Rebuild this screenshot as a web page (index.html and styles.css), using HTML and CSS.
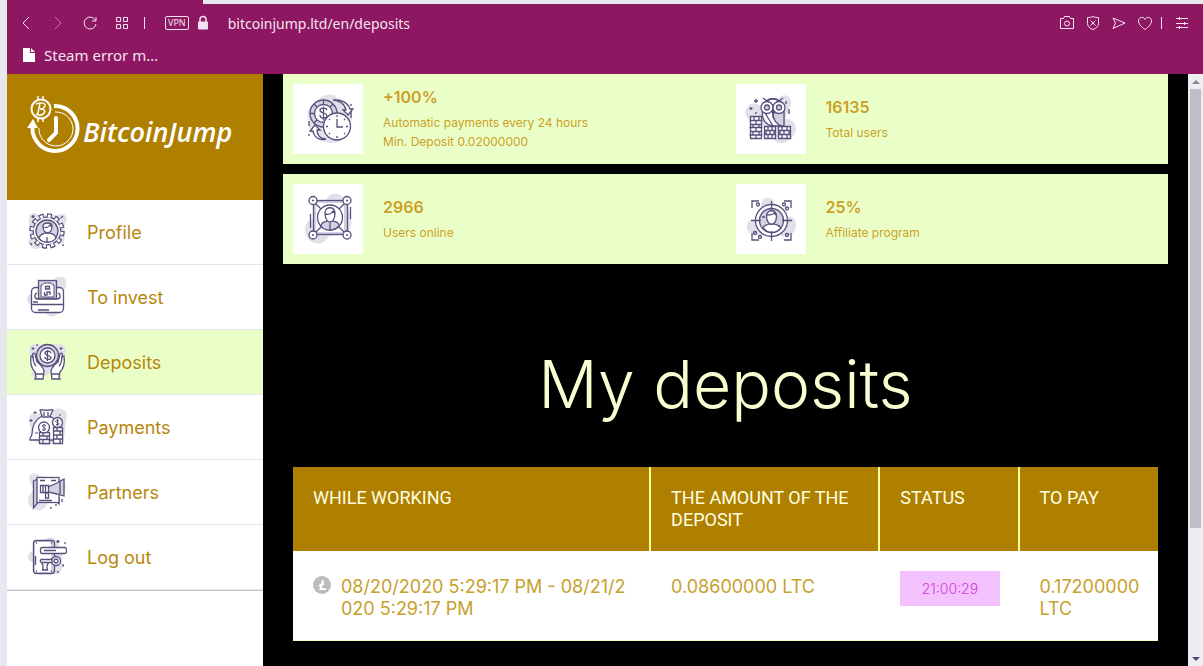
FILE: index.html
```html
<!DOCTYPE html>
<html lang="en">
<head>
    <meta charset="utf-8">
    <title>BitcoinJump - My deposits</title>
    <meta name="viewport" content="width=device-width, initial-scale=1.0">
    <link rel="stylesheet" href="styles.css">
</head>
<body>
    <div class="tabstrip"><div class="tab"></div></div>
    <div class="window">
        <header class="browser">
            <div class="toolbar">
                <button class="tool" aria-label="Back"><svg width="16" height="16" viewBox="0 0 16 16"><path d="M11 2 5 8l6 6"/></svg></button>
                <button class="tool off" aria-label="Forward"><svg width="16" height="16" viewBox="0 0 16 16"><path d="m5 2 6 6-6 6"/></svg></button>
                <button class="tool" aria-label="Reload"><svg width="16" height="16" viewBox="0 0 16 16"><path d="M13.500 5.500A6 6 0 1 0 14 9M14 2v4h-4"/></svg></button>
                <button class="tool" aria-label="Speed dial"><svg width="16" height="16" viewBox="0 0 16 16"><path d="M2.500 2.500h4v4h-4zM9.500 2.500h4v4h-4zM2.500 9.500h4v4h-4zM9.500 9.500h4v4h-4z"/></svg></button>
                <span class="divider"></span>
                <button class="vpn">VPN</button>
                <svg class="lock" width="12" height="16" viewBox="0 0 12 16"><path d="M3 7V4.500a3 3 0 0 1 6 0V7" fill="none" stroke="#f3e3f0" stroke-width="1.500"/><rect x="1" y="6.500" width="10" height="8" rx="1" fill="#f3e3f0"/></svg>
                <input class="address" type="text" aria-label="Address" value="bitcoinjump.ltd/en/deposits">
                <div class="tools">
                    <button class="tool" aria-label="Snapshot"><svg width="16" height="16" viewBox="0 0 16 16"><path d="M1.500 3.500h3l1-2h5l1 2h3v10h-13z"/><circle cx="8" cy="8.500" r="2.500"/></svg></button>
                    <button class="tool" aria-label="Ad blocker"><svg width="16" height="16" viewBox="0 0 16 16"><path d="M8 1.500c2 1 4 1 5.500 1v6c0 3-2.500 5-5.500 6-3-1-5.500-3-5.500-6v-6c1.500 0 3.500 0 5.500-1zM5.500 5.500l5 5M10.500 5.500l-5 5"/></svg></button>
                    <button class="tool" aria-label="My Flow"><svg width="16" height="16" viewBox="0 0 16 16"><path d="m2 3 12 5-12 5.500L4.500 8z"/></svg></button>
                    <button class="tool" aria-label="Bookmark"><svg width="16" height="16" viewBox="0 0 16 16"><path d="M8 14.500C4 11.500 1.500 9 1.500 6c0-4 5-5 6.500-1.500C9.500 1 14.500 2 14.500 6c0 3-2.500 5.500-6.500 8.500z"/></svg></button>
                    <span class="divider"></span>
                    <button class="tool" aria-label="Easy setup"><svg width="14" height="14" viewBox="0 0 14 14"><path d="M1 2.500h12M1 7.500h12M1 11.500h12M4.500 1v3M9.500 6v3M4.500 10v3"/></svg></button>
                </div>
            </div>
            <div class="bookmarks">
                <a class="bookmark" href="#">
                    <svg width="14" height="16" viewBox="0 0 14 16"><path d="M1 1h7v5h5v9H1z" fill="#fff"/><path d="m9 1 4 4H9z" fill="#fff"/></svg>
                    Steam error m…
                </a>
            </div>
        </header>

        <div class="page">
            <aside class="sidebar">
                <a class="logo" href="#">
                    <svg width="56" height="60" viewBox="0 0 56 60" fill="none" stroke="#fff">
                        <path d="M27 10A22.500 22.500 0 1 1 6 28" stroke-width="4"/>
                        <path d="m0 32 6-9 5 9z" fill="#fff" stroke="none"/>
                        <path d="M28 16a17 17 0 1 1-16 16" stroke-width="1"/>
                        <path d="M29 22v15l-7 7" stroke-width="4" stroke-linecap="round"/>
                        <circle cx="14" cy="13" r="9.500" stroke-width="2"/>
                        <path d="M11 0v3M16 0v3M11 23v3M16 23v3" stroke-width="1.500"/>
                        <path d="M13 7c-1 5-1 8-3 12M9 8c5-2 10-1 9 2-1 2-3 3-5 3 4 0 6 2 4 4-2 3-6 2-8 1" stroke-width="1.500"/>
                    </svg>
                    <span class="logo-text">BitcoinJump</span>
                </a>
                <nav class="menu">
                    <a class="menu-item" href="#">
                        <svg class="icon" width="40" height="40" viewBox="0 0 40 40">
                            <path class="blob" d="M2 6a5 5 0 0 1 9-3l20 0a5 5 0 0 1 7 8l-1 20-22 3a7 7 0 1 1-12-9z"/>
                            <circle cx="20" cy="19" r="15.500" pathLength="120" stroke-width="4.500" stroke-dasharray="6 4"/>
                            <circle class="dark" cx="20" cy="19" r="14.500" stroke="none"/>
                            <circle class="cut" cx="20" cy="19" r="15" pathLength="120" stroke-width="3" stroke-dasharray="3.500 6.500" stroke-dashoffset="-1.250"/>
                            <circle class="white" cx="20" cy="19" r="13.200" stroke="none"/>
                            <circle class="shade" cx="20" cy="19" r="11"/>
                            <path class="white" d="M12 26c1-4 4-4 6-5h4c3 1 6 1 7 5-3 5-13 6-17 0zM20 25v5"/>
                            <path class="white" d="M16 14c0-4 9-4 9 0 0 9-9 9-9 0zM16 15c3 1 6 0 7-2l2 2"/>
                            <path d="M6 3v3M4.500 4.500h3M36 4l-2 2M5 33l-2-2M36 32v2"/>
                        </svg>
                        Profile
                    </a>
                    <a class="menu-item" href="#">
                        <svg class="icon" width="40" height="40" viewBox="0 0 40 40">
                            <path class="blob" d="M27 4a6 6 0 0 1 12 2c1 5-2 6-3 9L4 28a6 6 0 0 1-3-9l8-6zM18 35h14c-3 6-10 6-14 0z"/>
                            <rect class="white" x="4.500" y="10.500" width="32" height="25" rx="4"/>
                            <path d="M10 16c-3 1-3 6 1 6h19c4 0 4-5 1-6"/>
                            <rect class="shade" x="11.500" y="3.500" width="18" height="18"/>
                            <path class="white" d="M14 8c2 0 3-1 3-2h7c0 1 1 2 3 2v12H14z" stroke-width="1"/>
                            <path d="M17.500 15v3h2.500v-3h3v3M18.500 9.500h4v2.500h-4zM5 27.500h31M11 33h11M6 25h5"/>
                        </svg>
                        To invest
                    </a>
                    <a class="menu-item active" href="#">
                        <svg class="icon" width="40" height="40" viewBox="0 0 40 40">
                            <path class="blob" d="M2 8a7 7 0 0 1 11-5l20-1a6 6 0 0 1 5 9l-4 14-18 10c-6 6-15 0-10-7z"/>
                            <circle class="shade" cx="20.500" cy="13.500" r="11"/><circle class="white" cx="20.500" cy="13.500" r="7.500"/>
                            <path d="M24 11c-1-3-6-2-6 0 0 3 6 2 6 5 0 2-6 2-6-1M20.500 8v11"/>
                            <path class="white" d="M4 14c-1 7 0 12 4 16l1 5-1 2h8l1-8c-1-4-4-7-7-9L8 12c-2-2-3 0-2 3zM37 14c1 7 0 12-4 16l-1 5 1 2h-8l-1-8c1-4 4-7 7-9l2-8c2-2 3 0 2 3z"/>
                            <path d="M6 14c0 5 1 8 3 10M35 14c0 5-1 8-3 10M9 32h7M25 32h7"/>
                            <path d="M6 5v3M4.500 6.500h3M34 5v3M32.500 6.500h3M10 2v2" stroke-width="1"/>
                        </svg>
                        Deposits
                    </a>
                    <a class="menu-item" href="#">
                        <svg class="icon" width="40" height="40" viewBox="0 0 40 40">
                            <path class="blob" d="M2 14a7 7 0 0 1 11-7l14-4c6-4 16 1 12 9l-2 22-19 5-12-6z"/>
                            <path class="white" d="M13 3c3-1 4 1 6 0 2 1 4-1 7 0l-3 6c5 3 8 7 9 12v12H3c-1-3 2-3 2-6 0-8 3-14 10-18z"/>
                            <path d="M15 10h9M17 5v4M21 5v4"/>
                            <path class="white" d="M12.500 25.500h10v11h-10zM12 29h11M12 32.500h11M16 26v3M20 29v3M16 33v3M26.500 20.500h9v16h-9zM26 24h10M26 28h10M26 32h10M30 21v3M33 24v4M30 28v4M33 32v4"/>
                            <circle class="white" cx="17" cy="20.500" r="5.500"/><circle class="white" cx="30.500" cy="15.500" r="5"/>
                            <path d="M19 18.500c-4-2-5 1-2 2s2 4-2 2M17 17v7M32 14c-3-2-5 1-2 1.500s3 3-1 2M30.500 12v7M8 4v3M6.500 5.500h3M4 12v3M2.500 13.500h3M33 7v2M8 26h3" stroke-width="1"/>
                        </svg>
                        Payments
                    </a>
                    <a class="menu-item" href="#">
                        <svg class="icon" width="40" height="40" viewBox="0 0 40 40">
                            <path class="blob" d="M2 7c0-6 8-7 11-3l20 3c8 0 7 12 2 15l-15 10C17 42 1 39 1 29c0-6 4-8 5-12z"/>
                            <path class="shade" d="m6.500 9 4-2v24l-4 5zM28 28l4 4v-6"/>
                            <rect class="white" x="10" y="5.500" width="22" height="25"/>
                            <path class="shade" d="m21 15 9-4 7-4v17l-7-2-9-2z"/>
                            <path class="white" d="M13.500 13.500h8v7h-8zM16 14v6M18.500 14v6M18.500 21h3v5h-3z"/>
                            <path d="M33 9v13M13 8.500h5M24 8.500h5M12 28.500h13M35 27v3M29 32v2M24 35v2"/>
                        </svg>
                        Partners
                    </a>
                    <a class="menu-item" href="#">
                        <svg class="icon" width="40" height="40" viewBox="0 0 40 40">
                            <path class="blob" d="M18 2c8-4 13 1 14 6l4 6-1 15c0 9-9 11-14 5L5 25c-6-1-5-10 1-11z"/>
                            <rect class="shade" x="6.500" y="3.500" width="21" height="33" rx="3"/>
                            <rect class="white" x="8" y="5" width="16" height="30" rx="2" stroke="none"/>
                            <rect class="white" x="13.500" y="10.500" width="26" height="6" rx="2"/>
                            <circle class="white" cx="29" cy="24" r="4.500"/><circle cx="29" cy="24" r="2"/>
                            <path class="white" d="M25 22.500H14c-1 1-1 3 1 3h10zM14.500 26c2 2 2 4 1 7h5c-1-3-1-5 1-7"/>
                            <path d="M9 6h1M24 6h1M9 34h1M24 34h1M8.500 19v9M17 13.500h12M31 3v3M29.500 4.500h3M38 5v2M36 27v3M31 34v2"/>
                        </svg>
                        Log out
                    </a>
                </nav>
            </aside>

            <main class="content">
                <section class="stats">
                    <div class="stat">
                        <svg class="stat-icon icon" width="70" height="70" viewBox="0 0 70 70">
                            <path class="blob" d="M24 18c4-8 17-10 20-4 18 4 18 22 11 29-1 18-22 20-30 10-12-4-8-15-10-18-2-8 2-14 9-17z"/>
                            <circle class="shade" cx="30.500" cy="29.500" r="13.500"/><circle class="white" cx="30.500" cy="29.500" r="9"/>
                            <path d="M30.500 16v5M17 29.500h5M21 20l3 3M40 20l-3 3M21 39l3-3M34 26c-1-3-7-2-7 0 0 4 7 2 7 6 0 3-7 3-7-1M30.500 22.500v14"/>
                            <path class="white" d="M40 16c6 0 12 4 13 10h-3l5 5 5-6h-3c-2-6-9-10-17-9zM33 55c-6 0-9-4-9-9h3l-5-5-5 6h3c1 6 6 10 13 8z"/>
                            <circle class="white" cx="44" cy="42.500" r="13.500"/>
                            <path d="M44 35v8h6M44 31v2M44 52v2M33 42.500h2M53 42.500h2M36 35l1 1M52 35l-1 1M36 50l1-1M52 50l-1-1M58 20v2M58 27v7M16 37v5M16 50v2"/>
                        </svg>
                        <div class="stat-text">
                            <strong class="stat-value">+100%</strong>
                            <span>Automatic payments every 24 hours</span>
                            <span>Min. Deposit 0.02000000</span>
                        </div>
                    </div>
                    <div class="stat">
                        <svg class="stat-icon icon" width="70" height="70" viewBox="0 0 70 70">
                            <path class="blob" d="M12 22c5-5 11-2 13 1l16-7c5-8 15-5 14 4l-6 15c13-1 14 14 5 20-6 7-15 4-16 0l-14-17c-15 0-18-9-12-16z"/>
                            <path class="white" d="M26.500 28c-1 8 4 13 10 14h11V27c0-16-22-17-21 1z"/>
                            <path class="shade" d="M37 29c0 6 3 11 9 13h2V27z"/>
                            <path d="m27 14 4 3c4-3 8-3 12 0l4-3M29 29l8 13M37 28v6"/>
                            <circle class="white" cx="31" cy="23.500" r="6"/><circle class="white" cx="43" cy="23.500" r="6"/>
                            <circle class="shade" cx="31" cy="23.500" r="2.500"/><circle class="shade" cx="43" cy="23.500" r="2.500"/>
                            <path d="m36 26 1 4 1-4"/>
                            <path class="white" d="M14.500 32.500h11v22h-11zM13.500 36.500h13M14.500 40.500h11M13.500 43.500h13M14.500 47.500h11M13.500 51h13M18 33v3M23 33v3M20 37v3M17 41v3M23 41v3M20 44v3M17 48v3M23 48v3M20 51v3"/>
                            <path class="white" d="M28.500 42.500h11v12h-11zM28 46.500h12M28 50.500h12M32 43v3M36 43v3M30 47v3M34 47v3M38 47v3M32 51v3M36 51v3M42.500 42.500h12v12h-12zM42 46.500h13M42 50.500h13M46 43v3M51 43v3M44 47v3M48 47v3M53 47v3M46 51v3M51 51v3"/>
                            <path d="M20 15v4M18 17h4M15 23v3M13.500 24.500h3M50 17v3M53 25v5M20 28v2"/>
                        </svg>
                        <div class="stat-text">
                            <strong class="stat-value">16135</strong>
                            <span>Total users</span>
                        </div>
                    </div>
                </section>
                <section class="stats">
                    <div class="stat">
                        <svg class="stat-icon icon" width="70" height="70" viewBox="0 0 70 70">
                            <path class="blob" d="M34 14c5-8 16-4 19 3l5 18c2 6-2 10-4 15L36 52c-5 11-20 9-23-1-4-10 2-15 9-16z"/>
                            <rect class="shade" x="20.500" y="16.500" width="34" height="34"/>
                            <rect class="white" x="23" y="19" width="28" height="29" stroke="none"/>
                            <path d="m20 17 34 34M54 17 20 51M17.500 30v14M57.500 23v12"/>
                            <circle class="white" cx="37" cy="33.500" r="12.500"/>
                            <path class="shade" d="M28 42c0-4 4-4 6-5h6c3 1 6 1 6 5-4 5-14 6-18 0zM37 39v7"/>
                            <path class="white" d="M32 29c0-7 10-7 10 0 0 12-10 12-10 0zM32 30c4 1 7-1 8-3l2 3"/>
                            <circle class="white" cx="20" cy="16.500" r="4"/><circle class="white" cx="54" cy="16.500" r="4"/><circle class="white" cx="20" cy="51" r="4"/><circle class="white" cx="54" cy="51" r="4"/>
                            <path d="M19 16.500h2M53 16.500h2M19 51h2M53 51h2"/>
                        </svg>
                        <div class="stat-text">
                            <strong class="stat-value">2966</strong>
                            <span>Users online</span>
                        </div>
                    </div>
                    <div class="stat">
                        <svg class="stat-icon icon" width="70" height="70" viewBox="0 0 70 70">
                            <path class="blob" d="M26 17c4-6 12-3 13 3l13 13c8-3 11 12 4 17-6 4-12 3-14-1l-18 2c-8 2-15-5-13-11 2-5 8-5 11-4z"/>
                            <circle class="white" cx="35.500" cy="36.500" r="16"/><circle class="shade" cx="35.500" cy="36.500" r="12"/>
                            <path class="white" d="M27 44c1-3 4-3 6-4h5c3 1 5 1 7 4-5 6-13 6-18 0z"/>
                            <path class="white" d="M30.500 32c0-7 10-7 10 0 0 11-10 11-10 0zM31 31c4 0 6 0 7-2l2 2"/>
                            <path d="M35.500 17v9M35.500 47v10M15 36.500h10M46 36.500h10M16 24v-7h7M48 17h7v7M16 49v7h7M48 56h7v-7M26 33h3M43 41v2"/>
                            <circle cx="22" cy="20.500" r="1.500"/><circle cx="48" cy="20.500" r="1.500"/><circle cx="51" cy="24.500" r="1.500"/><circle cx="19" cy="49" r="1.500"/><circle cx="24" cy="53" r="1.500"/><circle cx="51" cy="51" r="1.500"/>
                        </svg>
                        <div class="stat-text">
                            <strong class="stat-value">25%</strong>
                            <span>Affiliate program</span>
                        </div>
                    </div>
                </section>

                <h1 class="title">My deposits</h1>

                <table class="deposits">
                    <thead>
                        <tr>
                            <th class="col-date">While working</th>
                            <th class="col-amount">The amount of the deposit</th>
                            <th class="col-status">Status</th>
                            <th class="col-pay">To pay</th>
                        </tr>
                    </thead>
                    <tbody>
                        <tr>
                            <td>
                                <div class="period">
                                    <svg class="coin" width="18" height="18" viewBox="0 0 18 18"><circle cx="9" cy="9" r="9" fill="#bcbbc0"/><path d="M10 4 7.500 13H13M6 10l5-2.500" fill="none" stroke="#fff" stroke-width="2"/></svg>
                                    <span>08/20/2020 5:29:17 PM - 08/21/2020 5:29:17 PM</span>
                                </div>
                            </td>
                            <td>0.08600000 LTC</td>
                            <td class="status-cell"><span class="timer">21:00:29</span></td>
                            <td>0.17200000 LTC</td>
                        </tr>
                    </tbody>
                </table>
            </main>

            <div class="scrollbar">
                <span class="arrow up"></span>
                <div class="track"><div class="thumb"></div></div>
                <span class="arrow down"></span>
            </div>
        </div>
    </div>
</body>
</html>
```

FILE: styles.css
```css
* {
    box-sizing: border-box;
}
body {
    margin: 0px;
    height: 100vh;
    display: flex;
    flex-direction: column;
    overflow: hidden;
    padding-left: 7px;
    background-color: #e6e8ee;
    font-family: Inter, Roboto, sans-serif;
}
a {
    color: inherit;
    text-decoration: none;
}
button {
    padding: 0;
    border: 0;
    background: none;
    font: inherit;
    color: inherit;
}

/* browser frame */
.tabstrip {
    height: 4px;
    flex: none;
}
.tab {
    width: 196px;
    height: 4px;
    background: #8e1762;
}
.window {
    flex: 1;
    min-height: 0;
    display: flex;
    flex-direction: column;
}
.browser {
    flex: none;
    padding: 0 14px 0 11px;
    background: #8e1762;
    color: #f3e3f0;
    font-family: "Noto Sans", "Open Sans", sans-serif;
}
.toolbar {
    display: flex;
    align-items: center;
    gap: 16px;
    height: 38px;
}
.tool {
    display: flex;
}
.tool svg {
    fill: none;
    stroke: #f3e3f0;
}
.off {
    opacity: .5;
}
.divider {
    width: 1px;
    height: 12px;
    margin: 0 4px 0 -2px;
    background: #f3e3f0;
}
.vpn {
    padding: 0 2px;
    border: 1px solid #f3e3f0;
    border-radius: 2px;
    font-size: 9px;
    line-height: 12px;
}
.lock {
    margin-left: -8px;
}
.address {
    flex: 1;
    min-width: 0;
    margin-left: 3px;
    padding: 0;
    border: 0;
    outline: 0;
    background: none;
    color: #f3e3f0;
    font-family: inherit;
    font-size: 14px;
}
.tools {
    display: flex;
    align-items: center;
    gap: 10px;
}
.tools .divider {
    margin: 0 3px 0 -2px;
}
.bookmarks {
    height: 32px;
    padding: 1px 4px;
}
.bookmark {
    display: flex;
    align-items: center;
    gap: 8px;
    font-size: 15px;
    line-height: 24px;
}
.page {
    flex: 1;
    min-height: 0;
    display: flex;
    overflow: hidden;
    background: #000;
}

/* left menu */
.sidebar {
    width: 256px;
    flex: none;
    background: #fff;
}
.logo {
    display: flex;
    align-items: flex-start;
    height: 126px;
    padding: 22px 20px;
    background: #af7f00;
    color: #fff;
}
.logo-text {
    padding-top: 18px;
    font-family: "Open Sans", sans-serif;
    font-size: 27px;
    font-style: italic;
    font-weight: 600;
    line-height: 36px;
}
.menu {
    border-bottom: 1px solid #c4c6cc;
}
.menu-item {
    display: flex;
    align-items: center;
    gap: 20px;
    height: 65px;
    padding: 0 20px;
    border-bottom: 1px solid #e2e6ea;
    color: #b8860b;
    font-size: 18px;
}
.active {
    background: #eaffc8;
}
.icon {
    flex: none;
    fill: none;
    stroke: #55507c;
    stroke-width: 1.3;
}
.icon .blob {
    fill: #e2e1ea;
    stroke: none;
}
.icon .white {
    fill: #fff;
}
.icon .shade {
    fill: #d3d2e0;
}
.icon .dark {
    fill: #55507c;
}
.icon .cut {
    stroke: #fff;
}

/* content */
.content {
    flex: 1;
    min-width: 0;
    padding: 0 20px;
}
.stats {
    display: grid;
    grid-template-columns: 1fr 1fr;
    margin-bottom: 10px;
    background: #eaffc8;
}
.stat {
    display: flex;
    align-items: center;
    gap: 20px;
    height: 90px;
    padding: 0 10px;
    color: #cc9f26;
}
.stat-icon {
    background: #fff;
}
.stat-text {
    display: flex;
    flex-direction: column;
    font-size: 12px;
    line-height: 19px;
}
.stat-value {
    margin-bottom: 5px;
    font-size: 16px;
    font-weight: 600;
    line-height: 21px;
}
.title {
    margin: 0;
    padding: 70px 0 42px;
    color: #f5ffd0;
    font-size: 66px;
    font-weight: 300;
    line-height: 81px;
    text-align: center;
}
.deposits {
    width: calc(100% - 20px);
    margin: 0 10px;
    border-collapse: separate;
    border-spacing: 0;
    table-layout: fixed;
    background: #fff;
    font-size: 18px;
    line-height: 22px;
}
.deposits th {
    padding: 20px;
    border-right: 2px solid #fcfc9c;
    background: #af7f00;
    color: #ffffe0;
    font-family: Roboto, sans-serif;
    font-weight: 400;
    text-align: left;
    text-transform: uppercase;
    vertical-align: top;
}
.deposits th:last-child {
    border-right: 0;
}
.deposits td {
    padding: 25px 20px 20px;
    border-bottom: 1px solid #eaffc8;
    color: #c8a02c;
    vertical-align: top;
}
.deposits .status-cell {
    padding-top: 20px;
}
.col-date {
    width: 41.4%;
}
.col-amount {
    width: 26.5%;
}
.col-status {
    width: 16.1%;
}
.col-pay {
    width: 16%;
}
.period {
    display: flex;
    gap: 10px;
    word-break: break-all;
}
.coin {
    flex: none;
}
.timer {
    display: block;
    background: #f3c1fd;
    color: #d23ad8;
    font-size: 14px;
    font-weight: 300;
    line-height: 35px;
    text-align: center;
}

/* scrollbar */
.scrollbar {
    width: 15px;
    flex: none;
    display: flex;
    flex-direction: column;
    align-items: center;
    padding: 6px 0 5px;
    background: #eceef2;
}
.arrow {
    border: 4px solid transparent;
}
.up {
    border-top: 0;
    border-bottom-color: #8b8590;
}
.down {
    border-bottom: 0;
    border-top-color: #4d4878;
}
.track {
    flex: 1;
    align-self: stretch;
    padding: 5px 2px;
}
.thumb {
    height: 78%;
    background: #bfbfc7;
}
```
